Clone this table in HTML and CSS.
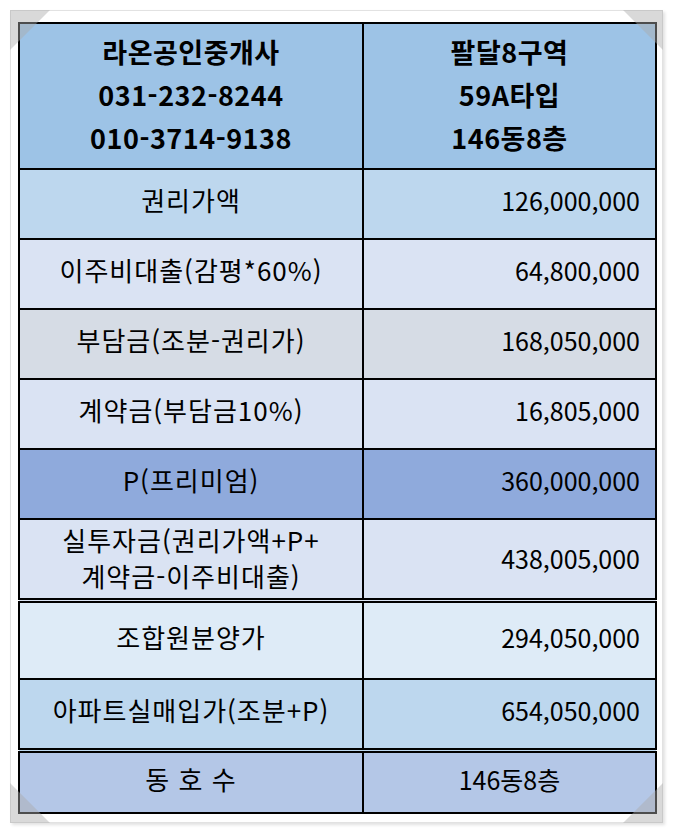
FILE: index.html
```html
<!DOCTYPE html>
<html lang="ko">
<head>
<meta charset="utf-8">
<link rel="stylesheet" href="styles.css">
</head>
<body>
<div class="frame">
  <span class="corner tl"></span>
  <span class="corner tr"></span>
  <span class="corner bl"></span>
  <span class="corner br"></span>
  <table class="sheet">
    <colgroup><col class="c1"><col class="c2"></colgroup>
    <tr class="head">
      <td class="left">라온공인중개사<br>031-232-8244<br>010-3714-9138</td>
      <td>팔달8구역<br>59A타입<br>146동8층</td>
    </tr>
    <tr class="r1"><td class="left">권리가액</td><td class="num">126,000,000</td></tr>
    <tr class="r2"><td class="left">이주비대출(감평*60%)</td><td class="num">64,800,000</td></tr>
    <tr class="r3"><td class="left">부담금(조분-권리가)</td><td class="num">168,050,000</td></tr>
    <tr class="r4"><td class="left">계약금(부담금10%)</td><td class="num">16,805,000</td></tr>
    <tr class="r5"><td class="left">P(프리미엄)</td><td class="num">360,000,000</td></tr>
    <tr class="r6"><td class="left">실투자금(권리가액+P+<br>계약금-이주비대출)</td><td class="num">438,005,000</td></tr>
    <tr class="r7"><td class="left">조합원분양가</td><td class="num">294,050,000</td></tr>
    <tr class="r8"><td class="left">아파트실매입가(조분+P)</td><td class="num">654,050,000</td></tr>
    <tr class="r9"><td class="left">동 호 수</td><td class="plain">146동8층</td></tr>
  </table>
</div>
</body>
</html>
```
FILE: styles.css
```css
html, body {
  margin: 0;
  padding: 0;
  background: #ffffff;
}
body {
  padding: 10px;
  font-family: "Noto Sans CJK KR", "Noto Sans", sans-serif;
}
.frame {
  position: relative;
  width: 653px;
  box-sizing: border-box;
  border: 1px solid #e2e2e2;
  box-shadow: 2px 2px 3px rgba(0,0,0,0.12);
  padding: 11px 7px 8px 7px;
  background: #fff;
}
.corner {
  position: absolute;
  width: 40px;
  height: 40px;
  background: rgba(170,170,170,0.45);
  z-index: 2;
}
.corner.tl { left: -1px; top: -1px; clip-path: polygon(0 0, 100% 0, 0 100%); }
.corner.tr { right: -1px; top: -1px; clip-path: polygon(0 0, 100% 0, 100% 100%); }
.corner.bl { left: -1px; bottom: -1px; clip-path: polygon(0 0, 100% 100%, 0 100%); }
.corner.br { right: -1px; bottom: -1px; clip-path: polygon(100% 0, 100% 100%, 0 100%); }
.sheet {
  width: 637px;
  table-layout: fixed;
  border-collapse: collapse;
  color: #000;
  font-size: 25px;
}
.c1 { width: 344px; }
.c2 { width: 293px; }
.sheet td {
  border: 2px solid #000;
  height: 60px;
  padding: 0 14px 8px 14px;
  text-align: center;
  vertical-align: middle;
  line-height: 36px;
  white-space: nowrap;
}
.sheet td.left {
  font-size: 26px;
  letter-spacing: 1px;
  padding-left: 4px;
  padding-right: 4px;
}
.sheet td.num { text-align: right; padding-right: 15px; }
.sheet td.plain { font-size: 25px; }
.sheet .head td {
  height: 140px;
  padding-bottom: 4px;
  font-weight: bold;
  line-height: 43px;
  background: #9dc3e6;
  font-size: 27px;
  letter-spacing: 0.5px;
}
.r1 td { background: #bdd7ee; }
.r2 td { background: #dae3f3; }
.r3 td { background: #d6dce5; }
.r4 td { background: #dae3f3; }
.r5 td { background: #8faadc; }
.sheet .r6 td { background: #dae3f3; height: 76px; padding-bottom: 2px; }
.r7 td { background: #deebf7; border-top: 5px double #000; height: 67px; }
.r8 td { background: #bdd7ee; }
.r9 td { background: #b4c7e7; border-top: 5px double #000; height: 51px; }
```
